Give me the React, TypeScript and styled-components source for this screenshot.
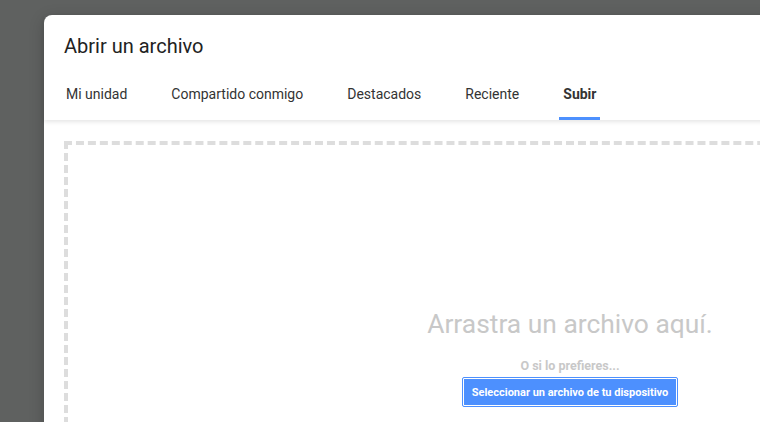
import React from 'react'
import styled, { createGlobalStyle } from 'styled-components'

const GlobalStyle = createGlobalStyle`
  html, body {
    margin: 0;
    padding: 0;
    background: #5f6160;
    overflow: hidden;
    font-family: Roboto, "Liberation Sans", Arial, sans-serif;
  }
`

const Backdrop = styled.div`
  width: 760px;
  height: 422px;
  padding: 15px 0 0 44px;
  box-sizing: border-box;
  overflow: hidden;
`

const Dialog = styled.div`
  width: 1052px;
  height: 600px;
  background: #fff;
  border-radius: 8px 8px 0 0;
  box-shadow: 0 4px 16px rgba(0, 0, 0, 0.2);
  display: flex;
  flex-direction: column;
`

const Header = styled.div`
  position: relative;
  z-index: 1;
  box-shadow: 0 2px 4px rgba(0, 0, 0, 0.1);
  padding: 0 18px;
`

const Title = styled.h1`
  margin: 0;
  padding: 18px 2px 0;
  height: 32px;
  font-size: 20px;
  font-weight: 400;
  color: #222;
  line-height: 26px;
`

const Tabs = styled.div`
  display: flex;
  gap: 36px;
  height: 55px;
`

const Tab = styled.div<{ $active?: boolean }>`
  display: flex;
  align-items: center;
  padding: 6px 4px 0;
  font-size: 14px;
  color: #333;
  font-weight: ${({ $active }) => ($active ? 700 : 400)};
  border-bottom: 3px solid ${({ $active }) => ($active ? '#4d90fe' : 'transparent')};
  box-sizing: border-box;
  cursor: pointer;
`

const Body = styled.div`
  flex: 1;
  padding: 21px 20px 0;
`

const DropZone = styled.div`
  height: 560px;
  border: 4px dashed #dddddd;
  display: flex;
  flex-direction: column;
  align-items: center;
  padding-top: 163px;
  box-sizing: border-box;
`

const DropText = styled.div`
  font-size: 26.4px;
  color: #c8c8c8;
  line-height: 32px;
`

const OrText = styled.div`
  margin-top: 18px;
  font-size: 12.5px;
  font-weight: 700;
  color: #c8c8c8;
  line-height: 16px;
`

const PickButton = styled.button`
  margin-top: 4px;
  height: 28px;
  padding: 0 8px;
  background: #4d90fe;
  border: 1px solid #fff;
  outline: 1px solid #4d90fe;
  border-radius: 1px;
  color: #fff;
  font-family: Roboto, "Liberation Sans", Arial, sans-serif;
  font-size: 11px;
  font-weight: 700;
  cursor: pointer;
`

const tabs = ['Mi unidad', 'Compartido conmigo', 'Destacados', 'Reciente', 'Subir']

export default function App() {
  return (
    <Backdrop>
      <GlobalStyle />
      <Dialog>
        <Header>
          <Title>Abrir un archivo</Title>
          <Tabs>
            {tabs.map(t => (
              <Tab key={t} $active={t === 'Subir'}>
                {t}
              </Tab>
            ))}
          </Tabs>
        </Header>
        <Body>
          <DropZone>
            <DropText>Arrastra un archivo aquí.</DropText>
            <OrText>O si lo prefieres...</OrText>
            <PickButton>Seleccionar un archivo de tu dispositivo</PickButton>
          </DropZone>
        </Body>
      </Dialog>
    </Backdrop>
  )
}
